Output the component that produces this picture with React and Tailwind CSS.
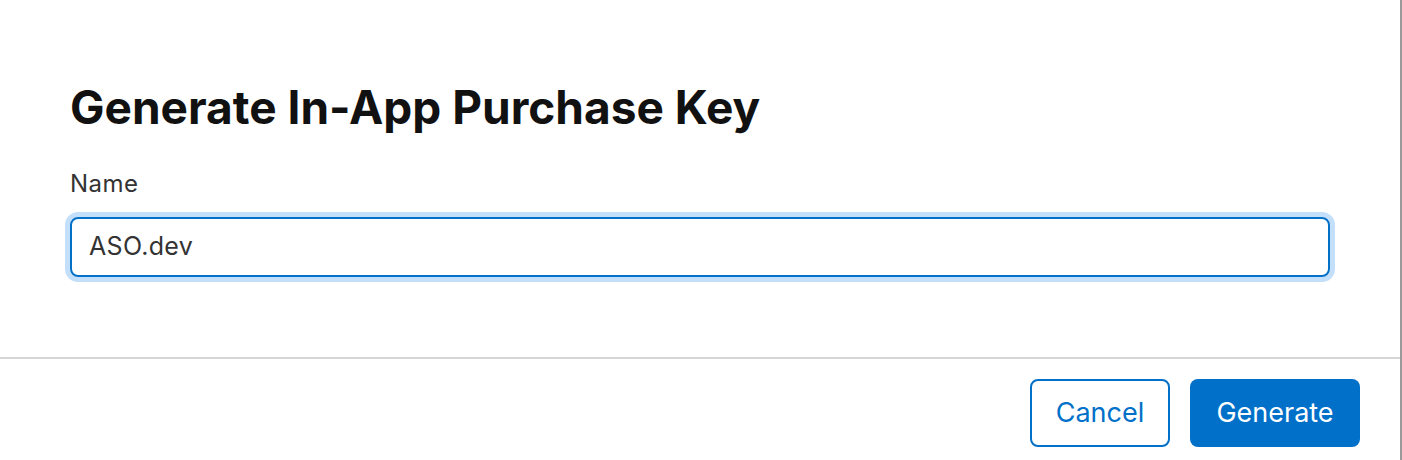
export default function App() {
  return (
    <div className="flex h-[460px] w-full bg-white font-['Inter','Liberation_Sans',sans-serif]">
      <div className="flex flex-1 flex-col">
        <div className="px-[70px] pt-[79px]">
          <h1 className="text-[46px] font-bold leading-[56px] text-[#111111]">
            Generate In-App Purchase Key
          </h1>
          <label className="mt-[33px] block text-[24px] leading-[32px] tracking-[0.5px] text-[#333333]">Name</label>
          <div className="mt-[17px] flex h-[60px] items-center rounded-[8px] border-2 border-[#0070c9] px-[17px] ring-[5px] ring-[#c4dffa]">
            <input
              className="w-full bg-transparent text-[25px] tracking-[0.3px] text-[#333333] outline-none"
              defaultValue="ASO.dev"
            />
          </div>
        </div>
        <div className="mt-[80px] h-[2px] bg-[#d6d6d6]" />
        <div className="flex justify-end gap-[20px] pr-[40px] pt-[20px]">
          <button className="h-[68px] w-[140px] rounded-[8px] border-2 border-[#0070c9] text-[27px] text-[#0070c9]">
            Cancel
          </button>
          <button className="h-[68px] w-[170px] rounded-[8px] bg-[#0070c9] text-[27px] text-white">
            Generate
          </button>
        </div>
      </div>
      <div className="w-[2px] bg-[#9a9a9a]" />
    </div>
  );
}
